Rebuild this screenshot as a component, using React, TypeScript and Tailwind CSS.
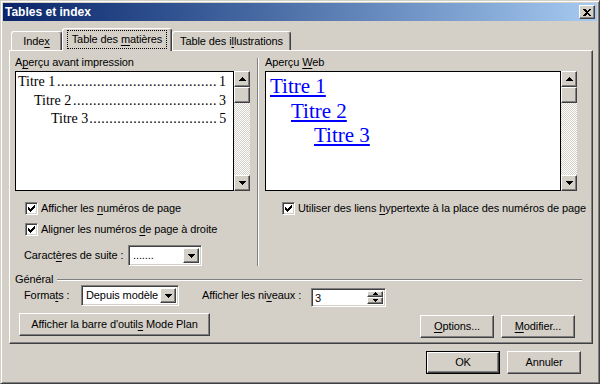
import React from 'react';

const raised =
  'border border-t-white border-l-white border-r-[#404040] border-b-[#404040] shadow-[inset_-1px_-1px_0_#808080]';
const sunken =
  'border border-t-[#808080] border-l-[#808080] border-r-white border-b-white shadow-[inset_1px_1px_0_#404040,inset_-1px_-1px_0_#d4d0c8]';
const checker = 'bg-[repeating-conic-gradient(#ffffff_0_25%,#d4d0c8_0_50%)] bg-[length:2px_2px]';

const ArrowUp = () => (
  <svg width="7" height="4" viewBox="0 0 7 4" shapeRendering="crispEdges">
    <path d="M3 0h1v1h1v1h1v1h1v1H0V3h1V2h1V1h1z" fill="#000" />
  </svg>
);

const ArrowDown = () => (
  <svg width="7" height="4" viewBox="0 0 7 4" shapeRendering="crispEdges">
    <path d="M0 0h7v1H6v1H5v1H4v1H3V3H2V2H1V1H0z" fill="#000" />
  </svg>
);

const SmallUp = () => (
  <svg width="5" height="3" viewBox="0 0 5 3" shapeRendering="crispEdges">
    <path d="M2 0h1v1h1v1h1v1H0V2h1V1h1z" fill="#000" />
  </svg>
);

const SmallDown = () => (
  <svg width="5" height="3" viewBox="0 0 5 3" shapeRendering="crispEdges">
    <path d="M0 0h5v1H4v1H3v1H2V2H1V1H0z" fill="#000" />
  </svg>
);

const Check = () => (
  <svg width="7" height="7" viewBox="0 0 7 7" shapeRendering="crispEdges">
    <path
      d="M6 0h1v3H6v1H5v1H4v1H3v1H2V6H1V5H0V2h1v1h1v1h1V3h1V2h1V1h1z"
      fill="#000"
    />
  </svg>
);

const U = ({ children }: { children: React.ReactNode }) => <span className="underline underline-offset-[2px]">{children}</span>;

const Checkbox = () => (
  <div className={`flex h-[13px] w-[13px] shrink-0 items-center justify-center bg-white ${sunken}`}>
    <Check />
  </div>
);

const Scrollbar = () => (
  <div className="flex w-[16px] flex-col">
    <div className={`flex h-[16px] items-center justify-center bg-[#d4d0c8] ${raised}`}>
      <ArrowUp />
    </div>
    <div className={`h-[16px] bg-[#d4d0c8] ${raised}`} />
    <div className={`flex-1 ${checker}`} />
    <div className={`flex h-[16px] items-center justify-center bg-[#d4d0c8] ${raised}`}>
      <ArrowDown />
    </div>
  </div>
);

const DropButton = () => (
  <div className={`flex w-[16px] items-center justify-center bg-[#d4d0c8] ${raised}`}>
    <ArrowDown />
  </div>
);

const Button = ({ children, className = '' }: { children: React.ReactNode; className?: string }) => (
  <div className={`flex h-[23px] items-center justify-center bg-[#d4d0c8] ${raised} ${className}`}>
    <span>{children}</span>
  </div>
);

const TocLine = ({ label, page, indent, count }: { label: string; page: string; indent: string; count: number }) => (
  <div className={`flex h-[18.5px] whitespace-nowrap pr-[7px] ${indent}`}>
    <span>{label}</span>
    <span className="ml-[1px] mr-[2px] flex-1 text-right tracking-[0.5px]">{'.'.repeat(count)}</span>
    <span>{page}</span>
  </div>
);

const Tab = ({ children, className = '' }: { children: React.ReactNode; className?: string }) => (
  <div
    className={`flex items-center justify-center rounded-t-[3px] border-t border-l border-r border-t-white border-l-white border-r-[#404040] bg-[#d4d0c8] shadow-[inset_-1px_0_0_#808080] ${className}`}
  >
    <span>{children}</span>
  </div>
);

export default function App() {
  return (
    <div
      className="flex h-[384px] w-[600px] flex-col border border-t-[#d4d0c8] border-l-[#d4d0c8] border-r-[#404040] border-b-[#404040] bg-[#d4d0c8] p-[2px] text-[11px] leading-[13px] tracking-[-0.1px] text-black shadow-[inset_1px_1px_0_#ffffff,inset_-1px_-1px_0_#808080]"
      style={{ fontFamily: '"Liberation Sans", Arial, sans-serif' }}
    >
      {/* title bar */}
      <div className="flex h-[18px] items-center justify-between bg-gradient-to-r from-[#0a246a] to-[#a6caf0] pl-[2px] pr-[2px]">
        <span className="text-[12px] font-bold leading-[18px] tracking-normal text-white">Tables et index</span>
        <div className={`flex h-[14px] w-[16px] items-center justify-center bg-[#d4d0c8] ${raised}`}>
          <svg width="8" height="7" viewBox="0 0 8 7" shapeRendering="crispEdges">
            <path d="M0 0h2l2 2 2-2h2L5 3.5 8 7H6L4 5 2 7H0l3-3.5z" fill="#000" />
          </svg>
        </div>
      </div>

      <div className="flex flex-1 flex-col pl-[6px] pr-[4px] pt-[7px]">
        {/* tabs */}
        <div className="relative z-10 flex h-[22px] items-end pl-[2px]">
          <Tab className="h-[19px] w-[51px]">
            Inde<U>x</U>
          </Tab>
          <Tab className="-mb-[1px] h-[23px] w-[110px] pb-[1px]">
            <span className="inline-block border border-dotted border-black px-[4px] py-[2px]">
              Table des <U>m</U>atières
            </span>
          </Tab>
          <Tab className="h-[19px] w-[119px]">
            Table des i<U>l</U>lustrations
          </Tab>
        </div>

        {/* panel */}
        <div className="flex h-[294px] w-[584px] flex-col border border-t-white border-l-white border-r-[#404040] border-b-[#404040] pl-[5px] pt-[5px] shadow-[inset_-1px_-1px_0_#808080]">
          <div className="flex">
            {/* left column */}
            <div className="flex w-[236px] flex-col">
              <div className="h-[13px]">
                A<U>p</U>erçu avant impression
              </div>
              <div className="mt-[2px] flex h-[120px]">
                <div
                  className="w-[219px] border border-black bg-white pt-[1px] text-[14px] leading-[18.5px] tracking-normal"
                  style={{ fontFamily: '"Liberation Serif", "Times New Roman", serif' }}
                >
                  <TocLine label="Titre 1" page="1" indent="pl-[2px]" count={40} />
                  <TocLine label="Titre 2" page="3" indent="pl-[18px]" count={36} />
                  <TocLine label="Titre 3" page="5" indent="pl-[35px]" count={32} />
                </div>
                <Scrollbar />
              </div>
              <div className="ml-[10px] mt-[11px] flex h-[13px] items-center gap-[3px]">
                <Checkbox />
                <span>
                  Afficher les <U>n</U>uméros de page
                </span>
              </div>
              <div className="ml-[10px] mt-[8px] flex h-[13px] items-center gap-[3px]">
                <Checkbox />
                <span>
                  Aligner les numéros <U>d</U>e page à droite
                </span>
              </div>
              <div className="ml-[9px] mt-[9px] flex h-[21px] items-center">
                <span className="w-[104px]">
                  Caract<U>è</U>res de suite :
                </span>
                <div className={`flex h-[21px] w-[74px] bg-white p-[2px] ${sunken}`}>
                  <span className="flex-1 pl-[2px] leading-[15px]">.......</span>
                  <DropButton />
                </div>
              </div>
            </div>

            {/* separator */}
            <div className="ml-[6px] mt-[2px] w-[2px] border-l border-l-[#808080] border-r border-r-white" />

            {/* right column */}
            <div className="ml-[6px] flex w-[312px] flex-col">
              <div className="h-[13px]">
                Aperçu <U>W</U>eb
              </div>
              <div className="mt-[2px] flex h-[120px]">
                <div
                  className="w-[296px] border border-black bg-white pt-[2px] text-[21px] leading-[24.5px] tracking-normal text-[#0000ff]"
                  style={{ fontFamily: '"Liberation Serif", "Times New Roman", serif' }}
                >
                  <div className="pl-[4px]">
                    <span className="underline underline-offset-[2px]">Titre 1</span>
                  </div>
                  <div className="pl-[25px]">
                    <span className="underline underline-offset-[2px]">Titre 2</span>
                  </div>
                  <div className="pl-[48px]">
                    <span className="underline underline-offset-[2px]">Titre 3</span>
                  </div>
                </div>
                <Scrollbar />
              </div>
              <div className="ml-[17px] mt-[11px] flex h-[13px] items-center gap-[3px] whitespace-nowrap">
                <Checkbox />
                <span>
                  Utiliser des liens <U>h</U>ypertexte à la place des numéros de page
                </span>
              </div>
            </div>
          </div>

          {/* général */}
          <div className="mt-[7px] flex h-[13px] w-[567px] items-center gap-[4px]">
            <span>Général</span>
            <div className="h-[2px] flex-1 border-t border-t-[#808080] border-b border-b-white" />
          </div>

          <div className="mt-[-1px] flex h-[21px] items-center">
            <span className="ml-[9px] w-[57px]">
              Forma<U>t</U>s :
            </span>
            <div className={`flex h-[21px] w-[98px] bg-white p-[2px] ${sunken}`}>
              <span className="flex-1 pl-[2px] leading-[15px]">Depuis modèle</span>
              <DropButton />
            </div>
            <span className="ml-[23px] w-[109px]">
              Afficher les ni<U>v</U>eaux :
            </span>
            <div className={`mt-[3px] flex h-[19px] w-[75px] bg-white p-[2px] ${sunken}`}>
              <span className="flex-1 pl-[1px] leading-[14px]">3</span>
              <div className="flex w-[16px] flex-col">
                <div className={`flex h-[7.5px] flex-1 items-center justify-center bg-[#d4d0c8] ${raised}`}>
                  <SmallUp />
                </div>
                <div className={`flex h-[7.5px] flex-1 items-center justify-center bg-[#d4d0c8] ${raised}`}>
                  <SmallDown />
                </div>
              </div>
            </div>
          </div>

          <div className="mt-[7px] flex items-start">
            <Button className="ml-[4px] w-[191px]">
              Afficher la barre d'outil<U>s</U> Mode Plan
            </Button>
            <Button className="ml-[210px] mt-[2px] w-[74px]">
              <U>O</U>ptions...
            </Button>
            <Button className="ml-[7px] mt-[2px] w-[74px]">
              <U>M</U>odifier...
            </Button>
          </div>
        </div>

        {/* bottom buttons */}
        <div className="mt-[7px] flex">
          <div className="ml-[417px] border border-black">
            <div className={`flex h-[21px] w-[72px] items-center justify-center bg-[#d4d0c8] ${raised}`}>OK</div>
          </div>
          <Button className="ml-[7px] w-[74px]">Annuler</Button>
        </div>
      </div>
    </div>
  );
}
